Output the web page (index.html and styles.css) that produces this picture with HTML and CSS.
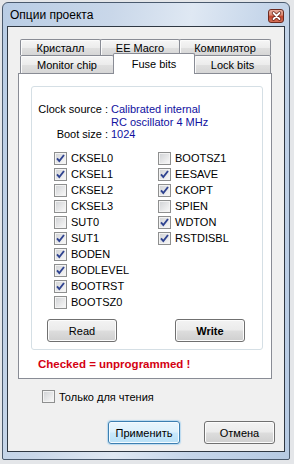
FILE: index.html
```html
<!DOCTYPE html>
<html>
<head>
<meta charset="utf-8">
<link rel="stylesheet" href="styles.css">
</head>
<body>
<div class="win">
  <div class="titlebar">
    <span class="title">Опции проекта</span>
    <span class="close"><svg width="13" height="12" viewBox="0 0 13 12"><path d="M3.5 3 L9.5 9 M9.5 3 L3.5 9" stroke="#6a2418" stroke-width="3.4" stroke-linecap="round"/><path d="M3.5 3 L9.5 9 M9.5 3 L3.5 9" stroke="#fff" stroke-width="1.8" stroke-linecap="round"/></svg></span>
  </div>
  <div class="client">
    <div class="tabctl">
      <div class="tabrow r1">
        <div class="tab t-kr">Кристалл</div>
        <div class="tab t-ee">EE Macro</div>
        <div class="tab t-comp">Компилятор</div>
      </div>
      <div class="tabrow r2">
        <div class="tab t-mon">Monitor chip</div>
        <div class="tab t-fuse sel">Fuse bits</div>
        <div class="tab t-lock">Lock bits</div>
      </div>
      <div class="panel">
        <div class="group">
          <div class="info">
            <span class="lbl">Clock source :</span><span class="val">Calibrated internal</span>
            <span class="lbl"></span><span class="val">RC oscillator 4 MHz</span>
            <span class="lbl">Boot size :</span><span class="val">1024</span>
          </div>
          <div class="checks">
            <div class="col">
              <div class="ck"><span class="cb on"><svg width="11" height="11" viewBox="0 0 11 11"><path d="M2 5.3 L4.3 8 L9 2" fill="none" stroke="#2f4390" stroke-width="1.9"/></svg></span>CKSEL0</div>
              <div class="ck"><span class="cb on"><svg width="11" height="11" viewBox="0 0 11 11"><path d="M2 5.3 L4.3 8 L9 2" fill="none" stroke="#2f4390" stroke-width="1.9"/></svg></span>CKSEL1</div>
              <div class="ck"><span class="cb"></span>CKSEL2</div>
              <div class="ck"><span class="cb"></span>CKSEL3</div>
              <div class="ck"><span class="cb"></span>SUT0</div>
              <div class="ck"><span class="cb on"><svg width="11" height="11" viewBox="0 0 11 11"><path d="M2 5.3 L4.3 8 L9 2" fill="none" stroke="#2f4390" stroke-width="1.9"/></svg></span>SUT1</div>
              <div class="ck"><span class="cb on"><svg width="11" height="11" viewBox="0 0 11 11"><path d="M2 5.3 L4.3 8 L9 2" fill="none" stroke="#2f4390" stroke-width="1.9"/></svg></span>BODEN</div>
              <div class="ck"><span class="cb on"><svg width="11" height="11" viewBox="0 0 11 11"><path d="M2 5.3 L4.3 8 L9 2" fill="none" stroke="#2f4390" stroke-width="1.9"/></svg></span>BODLEVEL</div>
              <div class="ck"><span class="cb on"><svg width="11" height="11" viewBox="0 0 11 11"><path d="M2 5.3 L4.3 8 L9 2" fill="none" stroke="#2f4390" stroke-width="1.9"/></svg></span>BOOTRST</div>
              <div class="ck"><span class="cb"></span>BOOTSZ0</div>
            </div>
            <div class="col">
              <div class="ck"><span class="cb"></span>BOOTSZ1</div>
              <div class="ck"><span class="cb on"><svg width="11" height="11" viewBox="0 0 11 11"><path d="M2 5.3 L4.3 8 L9 2" fill="none" stroke="#2f4390" stroke-width="1.9"/></svg></span>EESAVE</div>
              <div class="ck"><span class="cb on"><svg width="11" height="11" viewBox="0 0 11 11"><path d="M2 5.3 L4.3 8 L9 2" fill="none" stroke="#2f4390" stroke-width="1.9"/></svg></span>CKOPT</div>
              <div class="ck"><span class="cb"></span>SPIEN</div>
              <div class="ck"><span class="cb on"><svg width="11" height="11" viewBox="0 0 11 11"><path d="M2 5.3 L4.3 8 L9 2" fill="none" stroke="#2f4390" stroke-width="1.9"/></svg></span>WDTON</div>
              <div class="ck"><span class="cb on"><svg width="11" height="11" viewBox="0 0 11 11"><path d="M2 5.3 L4.3 8 L9 2" fill="none" stroke="#2f4390" stroke-width="1.9"/></svg></span>RSTDISBL</div>
            </div>
          </div>
          <div class="gbtns">
            <span class="btn">Read</span>
            <span class="btn bold">Write</span>
          </div>
        </div>
        <div class="warn">Checked = unprogrammed !</div>
      </div>
    </div>
    <div class="ro"><span class="cb"></span>Только для чтения</div>
    <div class="dbtns">
      <span class="btn def">Применить</span>
      <span class="btn cancel">Отмена</span>
    </div>
  </div>
</div>
</body>
</html>
```

FILE: styles.css
```css
html, body {
  margin: 0;
  padding: 0;
}
body {
  background: #e4e6e9;
  font-family: "Liberation Sans", Arial, sans-serif;
  font-size: 11px;
  color: #000;
}
.win {
  box-sizing: border-box;
  width: 288px;
  height: 458px;
  margin: 2px 0 0 2px;
  border: 1px solid #4a5a6e;
  border-radius: 6px 6px 2px 2px;
  padding: 0 4px 7px 4px;
  display: flex;
  flex-direction: column;
  background: linear-gradient(100deg, #b9cde5 0%, #c9d7e9 30%, #dfe8f3 52%, #c6d6ea 72%, #b6cae3 100%);
}
.titlebar {
  height: 23px;
  display: flex;
  align-items: flex-start;
}
.title {
  margin: 4px 0 0 3px;
  font-size: 12px;
  line-height: 16px;
  color: #000;
}
.close {
  box-sizing: border-box;
  margin: 6px 1px 0 auto;
  width: 16px;
  height: 14px;
  border: 1px solid #6b2a20;
  border-radius: 3px;
  background: linear-gradient(#eab0a2, #d98a74 40%, #c2452e 55%, #d57058);
  display: flex;
  align-items: center;
  justify-content: center;
}
.close svg { display: block; }
.client {
  box-sizing: border-box;
  width: 278px;
  height: 426px;
  border: 1px solid #2f3843;
  background: #f0f0f0;
}
.tabctl {
  width: 254px;
  margin: 12px 0 0 10px;
}
.tabrow {
  display: flex;
  padding-left: 2px;
  align-items: flex-end;
}
.r1 { height: 16px; }
.r2 { height: 18px; }
.tab {
  box-sizing: border-box;
  border: 1px solid #898c95;
  border-bottom: none;
  border-radius: 2px 2px 0 0;
  display: flex;
  align-items: center;
  justify-content: center;
  background: linear-gradient(#f6f6f6, #ececec 50%, #e0e0e0 51%, #d6d6d6);
  box-shadow: inset 1px 1px 0 #fbfbfb;
  white-space: nowrap;
}
.r1 .tab { height: 16px; }
.r2 .tab { height: 18px; }
.tab + .tab { margin-left: -1px; }
.t-kr { width: 81px; }
.t-ee { width: 80px; }
.t-comp { width: 92px; }
.t-mon { width: 94px; }
.t-fuse { width: 82px; }
.t-lock { width: 77px; }
.r2 .tab.sel {
  height: 21px;
  margin-bottom: -1px;
  background: #fff;
  box-shadow: none;
  position: relative;
  z-index: 1;
}
.panel {
  box-sizing: border-box;
  width: 254px;
  height: 306px;
  border: 1px solid #898c95;
  background: #fff;
  padding: 12px 0 0 12px;
}
.group {
  box-sizing: border-box;
  width: 232px;
  height: 264px;
  border: 1px solid #d5dfe5;
  border-radius: 3px;
  padding: 16px 0 0 0;
}
.info {
  display: grid;
  grid-template-columns: 72px auto;
  column-gap: 3px;
  padding-left: 4px;
  line-height: 12.5px;
  white-space: nowrap;
}
.lbl { text-align: right; }
.val { color: #1010a0; }
.checks {
  display: flex;
  margin-top: 9.5px;
  padding-left: 22px;
}
.col {
  width: 117px;
  display: flex;
  flex-direction: column;
}
.ck {
  height: 16px;
  display: flex;
  align-items: center;
  gap: 4px;
}
.cb {
  box-sizing: border-box;
  width: 13px;
  height: 13px;
  flex: none;
  border: 1px solid #8e8f8f;
  background: linear-gradient(135deg, #cfd1d4, #f4f4f4 85%);
  box-shadow: inset 0 0 0 1px #f3f3f3;
  display: flex;
  align-items: center;
  justify-content: center;
}
.cb svg { display: block; }
.gbtns {
  display: flex;
  gap: 58px;
  margin-top: 9px;
  padding-left: 15px;
}
.btn {
  box-sizing: border-box;
  width: 70px;
  height: 23px;
  border: 1px solid #707070;
  border-radius: 3px;
  background: linear-gradient(#f3f3f3, #ebebeb 48%, #dddddd 52%, #cfcfcf);
  box-shadow: inset 0 0 0 1px #fcfcfc;
  display: flex;
  align-items: center;
  justify-content: center;
}
.bold { font-weight: bold; }
.warn {
  margin: 8px 0 0 7px;
  line-height: 13px;
  font-size: 11.5px;
  font-weight: bold;
  color: #d40012;
}
.ro {
  display: flex;
  align-items: center;
  gap: 4px;
  height: 13px;
  margin: 11px 0 0 34px;
}
.dbtns {
  display: flex;
  justify-content: flex-end;
  gap: 24px;
  margin-top: 18px;
  padding-right: 9px;
}
.def {
  width: 72px;
  border-color: #3c7fb1;
  background: linear-gradient(#eaf6fd, #dcf1fc 48%, #c9e9fb 52%, #b8e0f6);
  box-shadow: inset 0 0 0 1px #f4fbff, 0 0 1px 1px rgba(120, 190, 240, 0.45);
}
.cancel { width: 71px; }
```
